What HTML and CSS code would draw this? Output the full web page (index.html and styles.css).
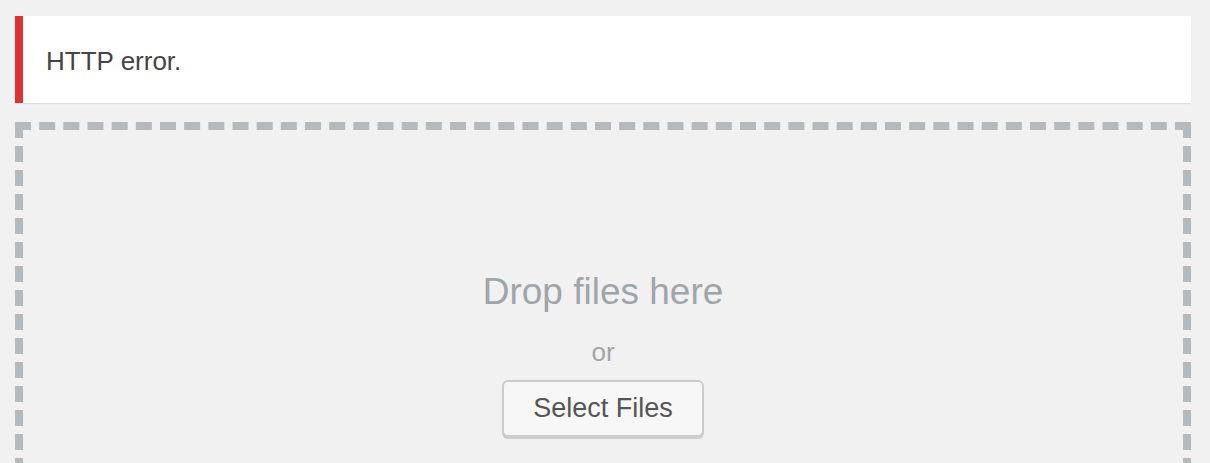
FILE: index.html
```html
<!DOCTYPE html>
<html lang="en">
<head>
    <meta charset="UTF-8">
    <meta name="viewport" content="width=device-width, initial-scale=1.0">
    <title>Upload New Media</title>
    <link rel="stylesheet" href="styles.css">
</head>
<body>

    <div class="wrap">
        <div class="notice notice-error">
            <p>HTTP error.</p>
        </div>

        <div class="drag-drop">
            <div class="drag-drop-inside">
                <p class="drag-drop-info">Drop files here</p>
                <p class="drag-drop-or">or</p>
                <button type="button" class="button">Select Files</button>
            </div>
        </div>
    </div>

</body>
</html>
```

FILE: styles.css
```css
html, body {
    margin: 0;
    height: 100%;
    overflow: hidden;
}

body {
    font-family: "Liberation Sans", Arial, sans-serif;
    background-color: #f1f1f1;
    color: #444;
}

.wrap {
    padding: 16px 19px 0 15px;
}

.notice {
    background-color: #fff;
    border-left: 8px solid #dc3232;
    box-shadow: 0 1px 1px rgba(0, 0, 0, 0.08);
    padding: 27px 23px 24px;
}

.notice p {
    margin: 0;
    font-size: 26px;
    line-height: 36px;
    color: #444;
}

.drag-drop {
    margin-top: 19px;
    border: 8px dashed #b4b9be;
    height: 600px;
}

.drag-drop-inside {
    display: flex;
    flex-direction: column;
    align-items: center;
    padding-top: 140px;
}

.drag-drop-info {
    margin: 0;
    font-size: 37px;
    line-height: 44px;
    color: #a0a5aa;
}

.drag-drop-or {
    margin: 20px 0 10px;
    font-size: 26px;
    line-height: 36px;
    color: #a0a5aa;
}

.button {
    font-family: inherit;
    font-size: 27px;
    line-height: 53px;
    height: 57px;
    padding: 0 29px;
    color: #555;
    background-color: #f7f7f7;
    border: 2px solid #ccc;
    border-radius: 6px;
    box-shadow: 0 2px 0 #ccc;
    cursor: pointer;
}
```
